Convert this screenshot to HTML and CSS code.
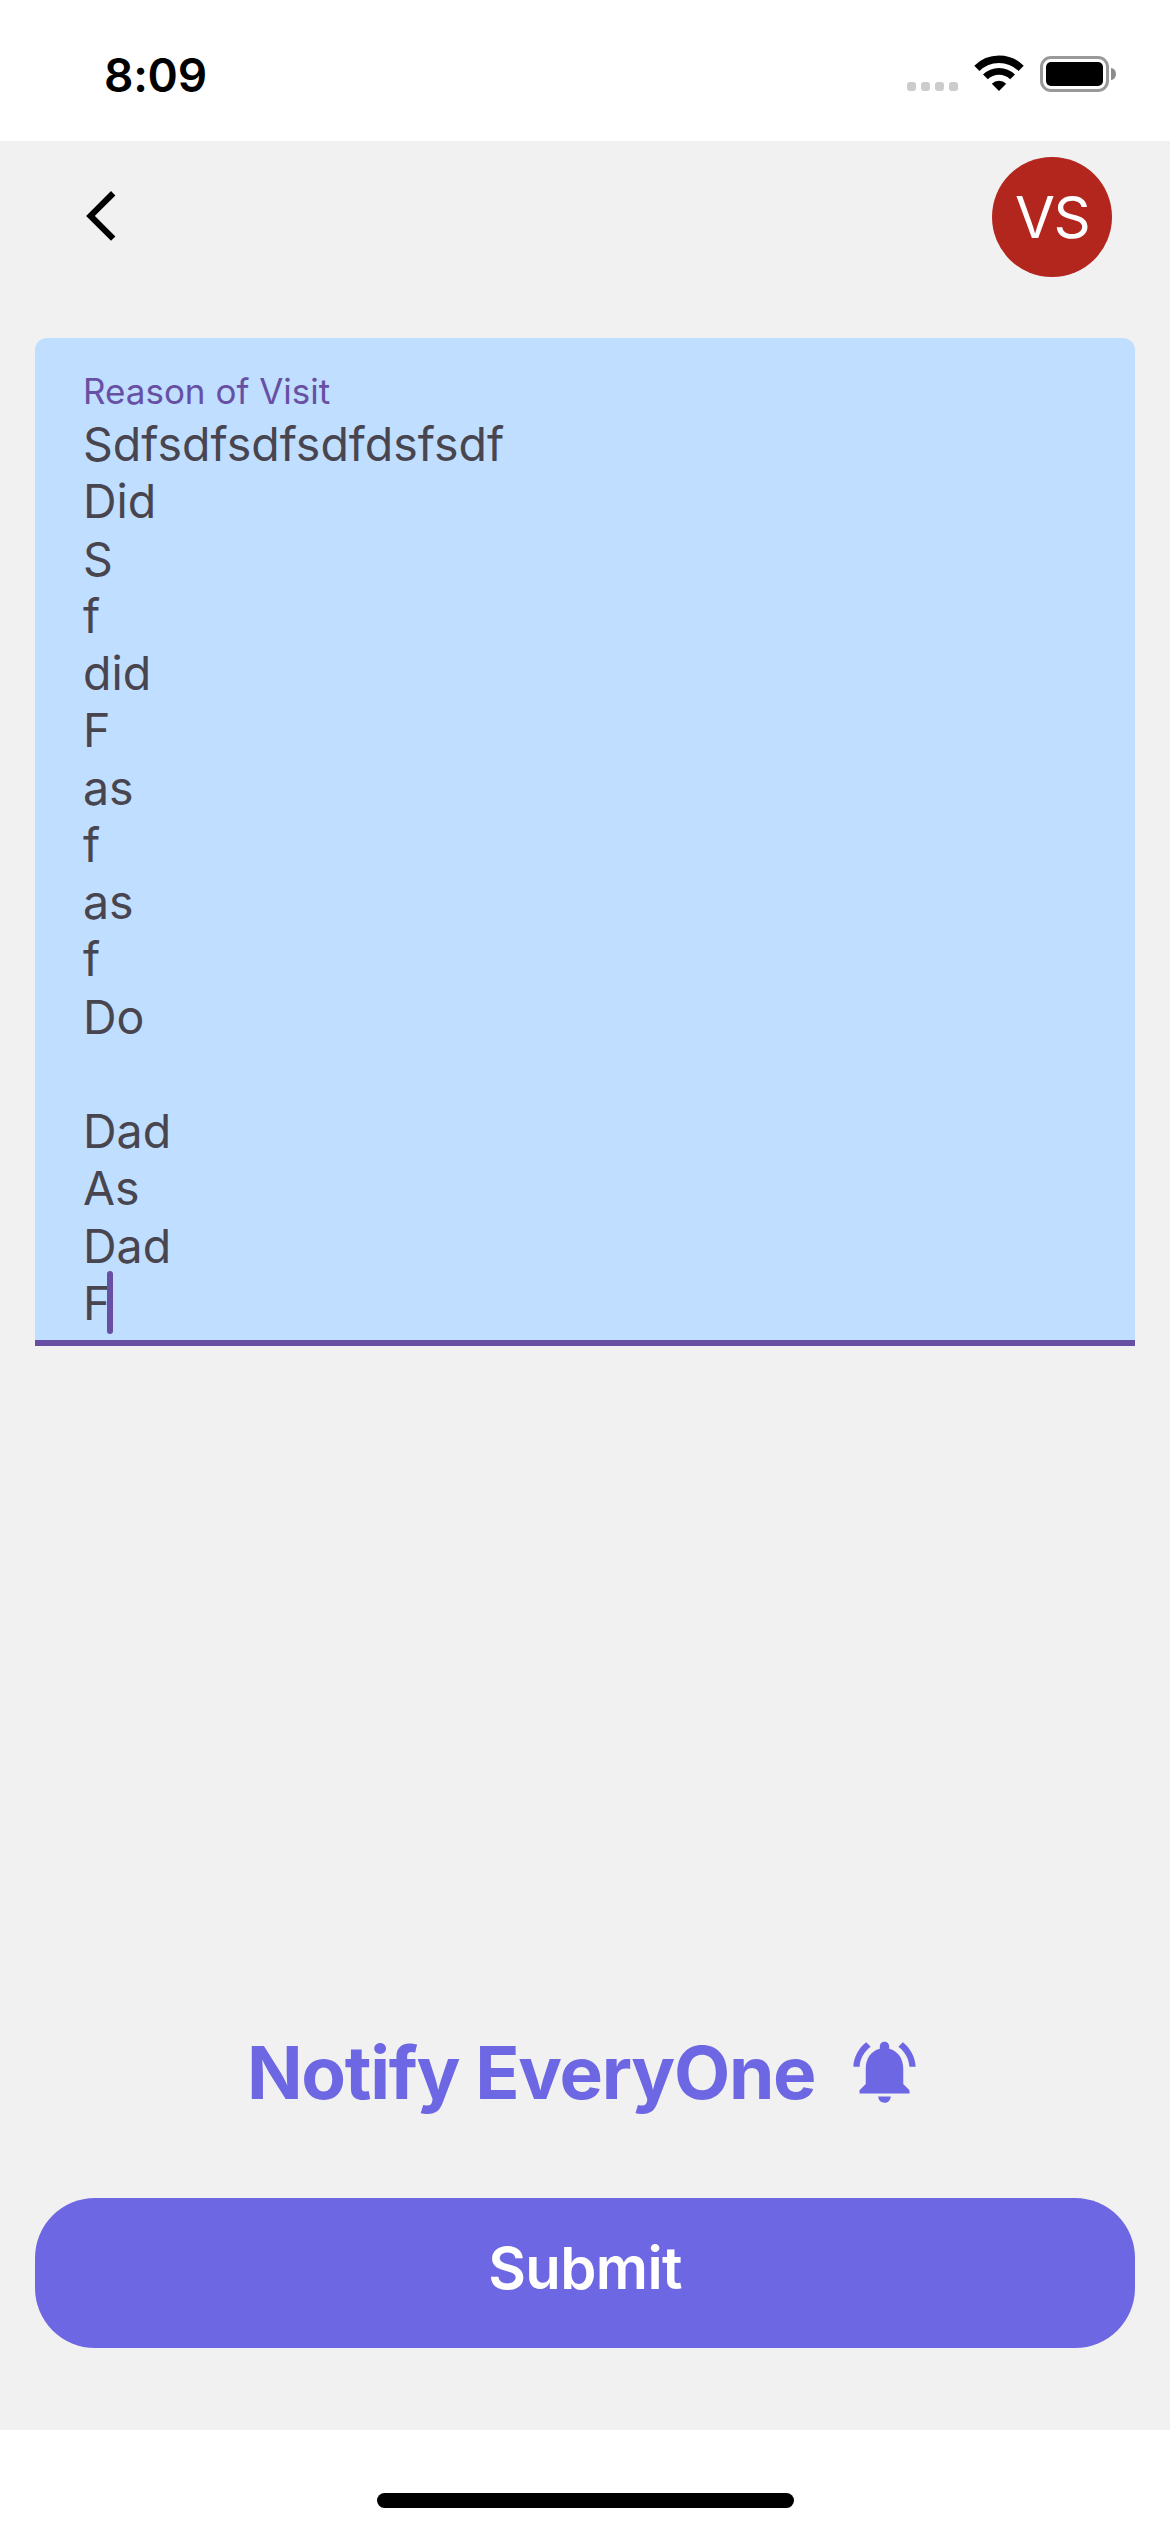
FILE: index.html
```html
<!DOCTYPE html>
<html lang="en">
<head>
<meta charset="utf-8">
<title>Reason of Visit</title>
<link rel="stylesheet" href="styles.css">
</head>
<body>
<div class="screen">
  <header class="status-bar">
    <span class="time">8:09</span>
    <div class="indicators">
      <div class="signal"><i></i><i></i><i></i><i></i></div>
      <svg class="wifi" width="50" height="37" viewBox="0 0 50 37">
        <path d="M2.87 13.37a31.3 31.3 0 0 1 44.26 0" fill="none" stroke="#000" stroke-width="7.4"/>
        <path d="M11.42 21.92a19.2 19.2 0 0 1 27.16 0" fill="none" stroke="#000" stroke-width="6.8"/>
        <path d="M25 36l-7.2-7.2a10.2 10.2 0 0 1 14.4 0z"/>
      </svg>
      <div class="battery"><div class="shell"><div class="charge"></div></div><div class="nub"></div></div>
    </div>
  </header>
  <main class="content">
    <nav class="top-bar">
      <svg class="back" width="36" height="56" viewBox="0 0 36 56"><path d="M31.2 5.2L8.5 27.9l22.7 22.7" fill="none" stroke="#000" stroke-width="6.2"/></svg>
      <div class="avatar">VS</div>
    </nav>
    <section class="field">
      <div class="label">Reason of Visit</div>
      <div class="value">Sdfsdfsdfsdfdsfsdf
Did
S
f
did
F
as
f
as
f
Do

Dad
As
Dad
<span class="last-line">F<span class="caret"></span></span></div>
    </section>
    <div class="notify">
      <span class="notify-text">Notify EveryOne</span>
      <svg class="bell" width="75" height="75" viewBox="0 0 24 24"><path d="M7.58 4.08L6.15 2.65C3.75 4.48 2.17 7.3 2.03 10.5h2c.15-2.65 1.51-4.97 3.55-6.42zm12.39 6.42h2c-.15-3.2-1.73-6.02-4.12-7.85l-1.42 1.43c2.02 1.45 3.39 3.77 3.54 6.42zM18 11c0-3.07-1.64-5.64-4.5-6.32V4c0-.83-.67-1.5-1.5-1.5s-1.5.67-1.5 1.5v.68C7.63 5.36 6 7.92 6 11v5l-2 2v1h16v-1l-2-2v-5zm-6 11c.14 0 .27-.01.4-.04.65-.14 1.18-.58 1.44-1.18.1-.24.15-.5.15-.78h-4c.01 1.1.9 2 2.01 2z"/></svg>
    </div>
    <button class="submit">Submit</button>
  </main>
  <footer class="home-area"><div class="home-indicator"></div></footer>
</div>
</body>
</html>
```
FILE: styles.css
```css
* { box-sizing: border-box; }

body {
  margin: 0;
  font-family: Inter, "Liberation Sans", sans-serif;
}

.screen {
  display: flex;
  flex-direction: column;
  width: 1170px;
  height: 2532px;
  background: #fff;
}

/* Status bar */
.status-bar {
  display: flex;
  justify-content: space-between;
  height: 141px;
  padding: 46px 54px 0 104px;
}
.time {
  font-size: 46px;
  font-weight: 600;
  line-height: 58px;
  letter-spacing: -0.25px;
}
.indicators {
  display: flex;
  align-items: flex-start;
  padding-top: 9px;
}
.signal {
  display: flex;
  gap: 5px;
  margin: 27px 16px 0 0;
}
.signal i {
  width: 9px;
  height: 9px;
  border-radius: 3px;
  background: #ccc;
}
.wifi {
  display: block;
  margin-right: 16px;
}
.battery {
  display: flex;
  align-items: center;
  gap: 2px;
  margin-top: 1px;
}
.shell {
  width: 69px;
  height: 36px;
  padding: 3px;
  border: 3px solid #999;
  border-radius: 11px;
}
.charge {
  height: 24px;
  border-radius: 5px;
  background: #000;
}
.nub {
  width: 5px;
  height: 12px;
  border-radius: 0 5px 5px 0 / 0 6px 6px 0;
  background: #8c8c8c;
}

/* Page */
.content {
  display: flex;
  flex-direction: column;
  height: 2289px;
  padding: 16px 35px 0;
  background: #f1f1f1;
}
.top-bar {
  display: flex;
  justify-content: space-between;
  height: 120px;
  padding: 0 23px 0 47px;
}
.back { margin-top: 31px; }
.avatar {
  width: 120px;
  height: 120px;
  border-radius: 50%;
  background: #b3261e;
  color: #fff;
  font-size: 58px;
  line-height: 121px;
  letter-spacing: -1.5px;
  text-align: center;
}

/* Text field */
.field {
  height: 1008px;
  margin-top: 61px;
  padding: 31px 48px 0;
  border-bottom: 6px solid #6750a4;
  border-radius: 12px 12px 0 0;
  background: #c0deff;
  color: #49454f;
}
.label {
  font-size: 35px;
  line-height: 44px;
  color: #6750a4;
}
.value {
  margin-top: 3px;
  font-size: 46.5px;
  line-height: 57.27px;
  white-space: pre;
}
.last-line { position: relative; }
.caret {
  position: absolute;
  left: 24px;
  top: -4px;
  width: 6px;
  height: 63px;
  border-radius: 3px;
  background: #6750a4;
}

/* Actions */
.notify {
  display: flex;
  align-items: center;
  justify-content: space-between;
  height: 90px;
  margin-top: 681px;
  padding: 0 213px 0 212px;
  color: #6e67e3;
}
.notify-text {
  font-size: 73px;
  font-weight: 700;
  letter-spacing: -1.28px;
  white-space: nowrap;
}
.bell {
  margin-bottom: 1px;
  fill: currentColor;
}
.submit {
  height: 150px;
  margin-top: 81px;
  padding: 0 0 10px;
  border: 0;
  border-radius: 60px;
  background: #6e67e3;
  color: #fff;
  font: 600 58px/75px Inter, "Liberation Sans", sans-serif;
  letter-spacing: -0.6px;
}

/* Home indicator */
.home-area {
  display: flex;
  justify-content: center;
  height: 102px;
  padding-top: 63px;
}
.home-indicator {
  width: 417px;
  height: 15px;
  border-radius: 8px;
  background: #000;
}
```
